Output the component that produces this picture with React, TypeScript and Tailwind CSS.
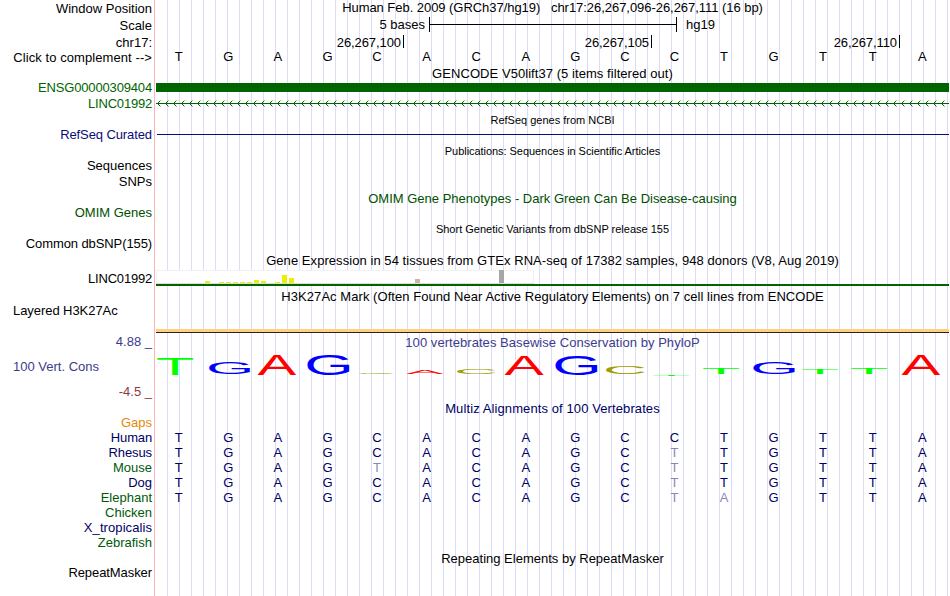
import React from "react";
import clsx from "clsx";

type LabelRow = { text: string; className: string };

// gaps are the distance from the previous 15px row
const labels: LabelRow[] = [
  { text: "Window Position", className: "mt-px" },
  { text: "Scale", className: "mt-[2px]" },
  { text: "chr17:", className: "mt-[2px]" },
  { text: "Click to complement -->", className: "tracking-[0.08px]" },
  { text: "ENSG00000309404", className: "mt-[15px] text-[#006400] tracking-[-0.16px]" },
  { text: "LINC01992", className: "mt-px text-[#006400] tracking-[-0.2px]" },
  { text: "RefSeq Curated", className: "mt-4 text-[#0c0c78] tracking-[-0.1px]" },
  { text: "Sequences", className: "mt-4" },
  { text: "SNPs", className: "mt-px" },
  { text: "OMIM Genes", className: "mt-4 text-[#005000]" },
  { text: "Common dbSNP(155)", className: "mt-4 tracking-[-0.1px]" },
  { text: "LINC01992", className: "mt-5 tracking-[-0.2px]" },
  { text: "Layered H3K27Ac", className: "mt-[17px] text-left tracking-[-0.06px]" },
  { text: "4.88 _", className: "mt-4 text-[#3c3c8c]" },
  { text: "100 Vert. Cons", className: "mt-[10px] text-left text-[#3c3c8c]" },
  { text: "-4.5 _", className: "mt-[10px] text-[#8c3c3c]" },
  { text: "Gaps", className: "mt-4 text-[#e6870a]" },
  { text: "Human", className: "text-[#000064] tracking-[-0.15px]" },
  { text: "Rhesus", className: "text-[#000064] tracking-[-0.1px]" },
  { text: "Mouse", className: "text-[#005a0a]" },
  { text: "Dog", className: "text-[#000064]" },
  { text: "Elephant", className: "text-[#005a0a]" },
  { text: "Chicken", className: "text-[#005a0a]" },
  { text: "X_tropicalis", className: "text-[#000064] tracking-[0.08px]" },
  { text: "Zebrafish", className: "text-[#005a0a]" },
  { text: "RepeatMasker", className: "mt-[15px] tracking-[-0.08px]" },
];

const reference = "TGAGCACAGCCTGTTA";

const alignments = [
  { species: "Human", bases: "TGAGCACAGCCTGTTA" },
  { species: "Rhesus", bases: "TGAGCACAGCTTGTTA" },
  { species: "Mouse", bases: "TGAGTACAGCTTGTTA" },
  { species: "Dog", bases: "TGAGCACAGCTTGTTA" },
  { species: "Elephant", bases: "TGAGCACAGCTAGTTA" },
];

// [left, height, colour], left is measured from the track edge
const tissues: [number, number, string][] = [
  [49, 2, "#eeee00"],
  [63, 1, "#eeee00"],
  [70, 1, "#eeee00"],
  [77, 1, "#eeee00"],
  [84, 1, "#eeee00"],
  [91, 1, "#eeee00"],
  [98, 3, "#eeee00"],
  [105, 2, "#eeee00"],
  [119, 1, "#eeee00"],
  [126, 8, "#eeee00"],
  [133, 5, "#eeee00"],
  [259, 4, "#cdb79e"],
  [343, 13, "#a6a6a6"],
];

// [letter, x1, x2, top, bottom]
const logo: [string, number, number, number, number][] = [
  ["T", 1, 37, 4, 21],
  ["G", 53, 94, 8, 20],
  ["A", 101.5, 140, 1, 21],
  ["G", 151.5, 193.5, 0, 21],
  ["C", 203, 238.5, 19, 19.9],
  ["A", 250, 287.5, 16, 20],
  ["C", 301, 339.5, 15, 20],
  ["A", 348.5, 387.5, 2, 21],
  ["G", 399.5, 441.5, 1, 21],
  ["C", 450, 488.5, 12, 20],
  ["T", 497, 533, 21, 21.9],
  ["T", 547, 583, 14, 20],
  ["G", 597.5, 639, 8, 20],
  ["T", 646, 682, 15, 20],
  ["T", 695, 731, 14, 20],
  ["A", 745.5, 784, 1, 21],
];

// ink box of each glyph at font-size 100: left, right, bottom, top
const ink: Record<string, [number, number, number, number]> = {
  T: [2.1, 58.9, 0, 68.8],
  A: [0.2, 66.4, 0, 68.8],
  G: [5, 70.9, -1, 69.8],
  C: [5, 68.2, -1, 69.8],
};

const logoColors: Record<string, string> = {
  T: "#00ff00",
  G: "#0000ff",
  A: "#ff0000",
  C: "#a0a000",
};

function Title({ children, className }: { children: React.ReactNode; className?: string }) {
  return (
    <div className={clsx("h-[15px] text-center whitespace-pre", className)}>
      {children}
    </div>
  );
}

function SmallTitle({ children, className }: { children: React.ReactNode; className?: string }) {
  return (
    <div className={clsx("h-3 text-center text-[11px] leading-3 whitespace-pre", className)}>
      {children}
    </div>
  );
}

function Bases({ bases, className }: { bases: string; className?: string }) {
  return (
    <div className={clsx("grid grid-cols-16 h-[15px] -ml-[2px] mr-[2px] text-center", className)}>
      {bases.split("").map((base, i) => (
        <span key={i} className={className && base !== reference[i] ? "text-[#8888b8]" : ""}>
          {base}
        </span>
      ))}
    </div>
  );
}

function ScaleBar() {
  return (
    <div className="flex mt-[2px] h-[15px]">
      <span className="w-[269px] text-right">5 bases</span>
      <div className="ml-1 flex h-[15px] w-[248px] items-center border-x border-black">
        <div className="h-px w-full bg-black" />
      </div>
      <span className="ml-[9px]">hg19</span>
    </div>
  );
}

function Ruler() {
  return (
    <div className="flex mt-[3px] h-[14px] text-right tracking-[-0.08px]">
      <div className="w-[248px] h-[13px] border-r border-black pr-[2px]">26,267,100</div>
      <div className="w-[248px] h-[13px] border-r border-black pr-[2px]">26,267,105</div>
      <div className="w-[248px] h-[13px] border-r border-black pr-[2px]">26,267,110</div>
    </div>
  );
}

function IntronArrows() {
  return (
    <svg className="mt-2 block" width="793" height="7" shapeRendering="crispEdges">
      <defs>
        <pattern id="arrow" width="8" height="7" patternUnits="userSpaceOnUse">
          <path d="M1 3h1v1h-1zM2 2h1v1h-1zM2 4h1v1h-1zM3 1h1v1h-1zM3 5h1v1h-1z" fill="#006400" />
          <path d="M4 0h1v1h-1zM4 6h1v1h-1z" fill="#006400" fillOpacity="0.4" />
        </pattern>
      </defs>
      <rect width="793" height="7" fill="url(#arrow)" />
      <rect y="3" width="793" height="1" fill="#006400" />
    </svg>
  );
}

function GtexTrack() {
  return (
    <div className="mt-[2px] border-b-2 border-[#006400]">
      <svg className="block" width="378" height="14" shapeRendering="crispEdges">
        <rect width="378" height="14" fill="#f2f2f2" />
        <rect x="1" y="1" width="376" height="12" fill="#ffffff" />
        <rect y="13" width="378" height="1" fill="#dcdcdc" />
        {tissues.map(([x, h, color]) => (
          <rect key={x} x={x} y={13 - h} width="5" height={h} fill={color} />
        ))}
      </svg>
    </div>
  );
}

function ConservationLogo() {
  return (
    <svg className="mt-1 block overflow-visible" width="793" height="24">
      {logo.map(([base, x1, x2, top, bottom], i) => {
        const [l, r, b, t] = ink[base];
        const sx = (x2 - x1) / (r - l);
        const sy = (bottom - top) / (t - b);
        return (
          <text
            key={i}
            fontSize="100"
            fill={logoColors[base]}
            transform={`matrix(${sx} 0 0 ${sy} ${x1 - l * sx} ${bottom + b * sy})`}
          >
            {base}
          </text>
        );
      })}
    </svg>
  );
}

function App() {
  return (
    <div className="flex h-[596px] w-[950px] overflow-hidden bg-white font-['Liberation_Sans',Arial,sans-serif] text-[13px] leading-[15px] text-black">
      <div className="w-[154px] shrink-0 pl-[13px] pr-[2px] text-right whitespace-nowrap">
        {labels.map((label, i) => (
          <div key={i} className={clsx("h-[15px]", label.className)}>
            {label.text}
          </div>
        ))}
      </div>
      <div className="mr-px w-px shrink-0 bg-[#ffb4b4]" />
      <div className="w-[793px] shrink-0 bg-[repeating-linear-gradient(to_right,transparent_0,transparent_11px,#dcdcf8_11px,#dcdcf8_12px)]">
        <Title className="tracking-[-0.045px]">
          {"Human Feb. 2009 (GRCh37/hg19)   chr17:26,267,096-26,267,111 (16 bp)"}
        </Title>
        <ScaleBar />
        <Ruler />
        <Bases bases={reference} />
        <Title className="mt-[2px] tracking-[0.06px]">GENCODE V50lift37 (5 items filtered out)</Title>
        <div className="mt-[2px] h-[9px] bg-[#006400]" />
        <IntronArrows />
        <SmallTitle className="mt-[7px]">RefSeq genes from NCBI</SmallTitle>
        <div className="mt-2 ml-px h-px bg-[#0c0c78]" />
        <SmallTitle className="mt-[10px] tracking-[-0.05px]">
          Publications: Sequences in Scientific Articles
        </SmallTitle>
        <Title className="mt-[34px] text-[#005000]">
          OMIM Gene Phenotypes - Dark Green Can Be Disease-causing
        </Title>
        <SmallTitle className="mt-[17px]">Short Genetic Variants from dbSNP release 155</SmallTitle>
        <Title className="mt-[18px] tracking-[0.06px]">
          Gene Expression in 54 tissues from GTEx RNA-seq of 17382 samples, 948 donors (V8, Aug 2019)
        </Title>
        <GtexTrack />
        <Title className="mt-[3px] tracking-[0.055px]">
          H3K27Ac Mark (Often Found Near Active Regulatory Elements) on 7 cell lines from ENCODE
        </Title>
        <div className="mt-[25px] h-1 border-b border-[#302020] bg-[#ffd080]" />
        <Title className="mt-[2px] text-[#3c3c8c] tracking-[0.05px]">
          100 vertebrates Basewise Conservation by PhyloP
        </Title>
        <ConservationLogo />
        <Title className="mt-[23px] text-[#000064] tracking-[0.1px]">Multiz Alignments of 100 Vertebrates</Title>
        <div className="mt-[14px]">
          {alignments.map((row) => (
            <Bases key={row.species} bases={row.bases} className="text-[#000064]" />
          ))}
        </div>
        <Title className="mt-[46px]">Repeating Elements by RepeatMasker</Title>
      </div>
    </div>
  );
}

export default App;
